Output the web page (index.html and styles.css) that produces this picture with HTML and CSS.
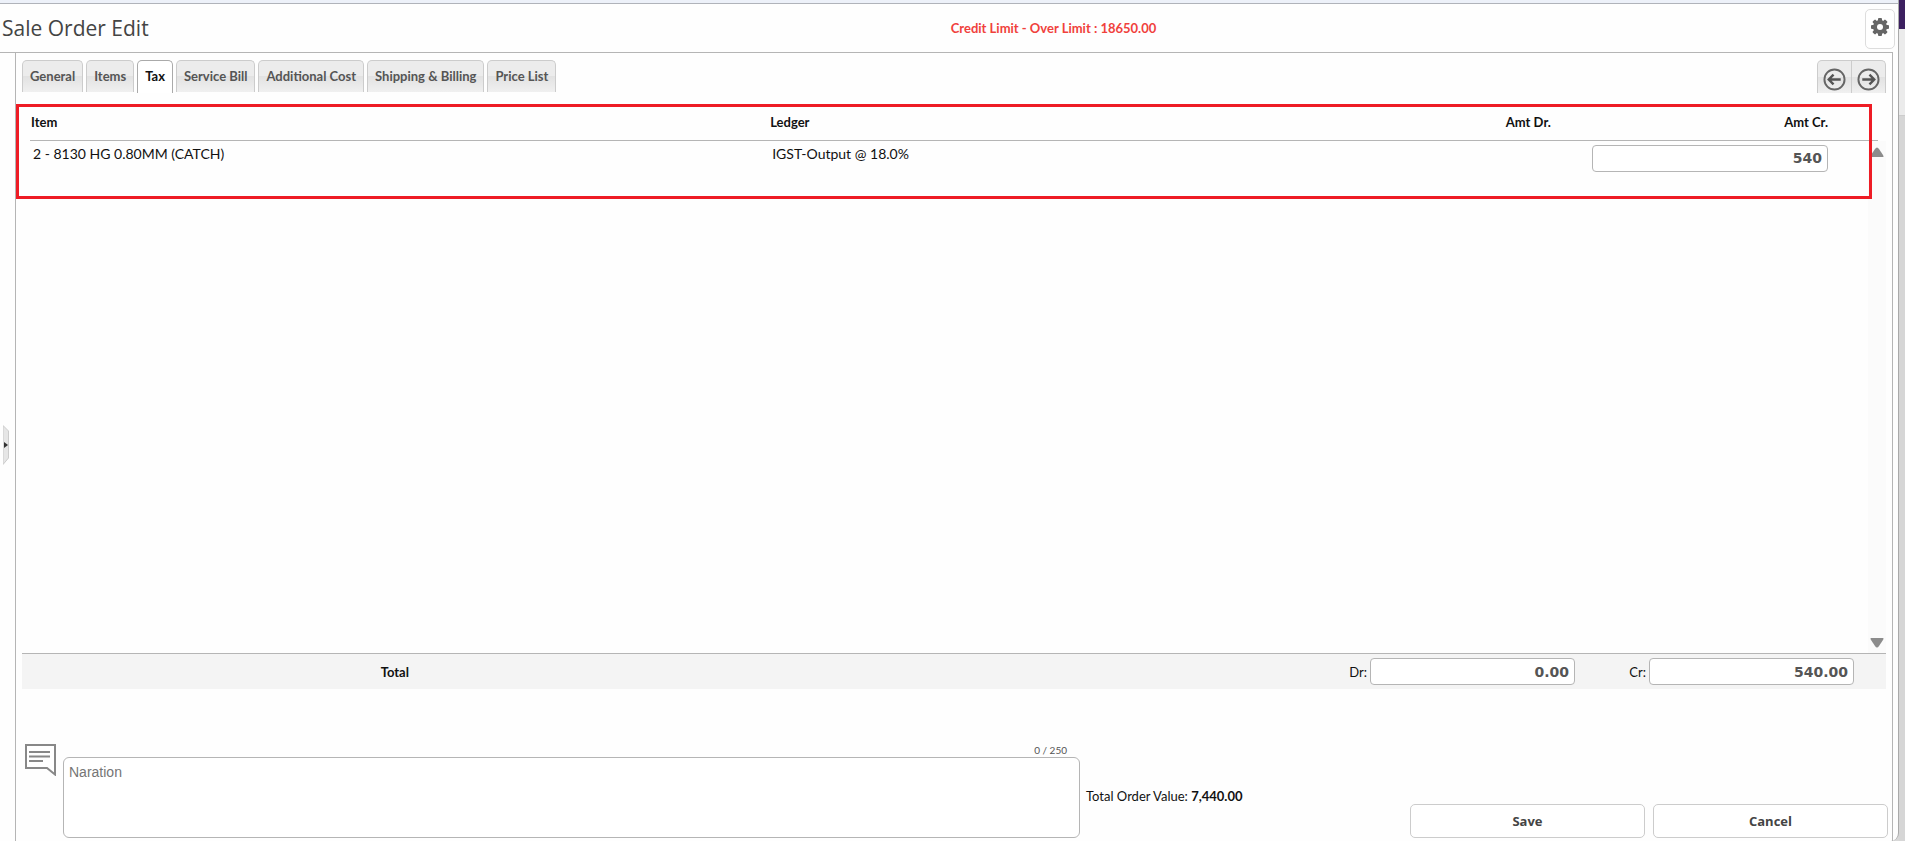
FILE: index.html
```html
<!DOCTYPE html>
<html lang="en">
<head>
<meta charset="utf-8">
<meta name="viewport" content="width=device-width, initial-scale=1.0">
<title>Sale Order Edit</title>
<link rel="stylesheet" href="styles.css">
</head>
<body>

<div class="window">
	<header class="header">
		<h1>Sale Order Edit</h1>
		<p class="credit-limit">Credit Limit - Over Limit : 18650.00</p>
		<button type="button" class="settings" aria-label="Settings">
			<svg width="18" height="18" viewBox="0 0 18 18">
				<g fill="#666">
					<rect x="7" y="0" width="4" height="18" rx="1"/>
					<rect x="7" y="0" width="4" height="18" rx="1" transform="rotate(45 9 9)"/>
					<rect x="7" y="0" width="4" height="18" rx="1" transform="rotate(90 9 9)"/>
					<rect x="7" y="0" width="4" height="18" rx="1" transform="rotate(135 9 9)"/>
					<circle cx="9" cy="9" r="7"/>
				</g>
				<circle cx="9" cy="9" r="3" fill="#fff"/>
			</svg>
		</button>
	</header>

	<div class="content">
		<aside class="rail">
			<button type="button" class="expand" aria-label="Expand">
				<svg width="6" height="40" viewBox="0 0 6 40">
					<path d="M0 0.5L5.5 6V33L0 39.5Z" fill="#e6e6e6" stroke="#ccc"/>
					<path d="M1 17L5 20L1 23Z" fill="#333"/>
				</svg>
			</button>
		</aside>

		<main class="panel">
			<div class="toolbar">
				<nav class="tabs">
					<button type="button" class="tab">General</button>
					<button type="button" class="tab">Items</button>
					<button type="button" class="tab active">Tax</button>
					<button type="button" class="tab">Service Bill</button>
					<button type="button" class="tab">Additional Cost</button>
					<button type="button" class="tab">Shipping &amp; Billing</button>
					<button type="button" class="tab">Price List</button>
				</nav>
				<div class="pager">
					<button type="button" aria-label="Previous">
						<svg width="23" height="23" viewBox="0 0 24 24" fill="none" stroke="#666">
							<circle cx="12" cy="12" r="10.5" stroke-width="2"/>
							<path d="M18.5 12H7M11 7L6 12L11 17" stroke="#555" stroke-width="2.5"/>
						</svg>
					</button>
					<button type="button" aria-label="Next">
						<svg width="23" height="23" viewBox="0 0 24 24" fill="none" stroke="#666">
							<circle cx="12" cy="12" r="10.5" stroke-width="2"/>
							<path d="M5.5 12H17M13 7L18 12L13 17" stroke="#555" stroke-width="2.5"/>
						</svg>
					</button>
				</div>
			</div>

			<section class="list">
				<table>
					<thead>
						<tr>
							<th class="col-item">Item</th>
							<th>Ledger</th>
							<th class="col-amount">Amt Dr.</th>
							<th class="col-amount">Amt Cr.</th>
							<td class="col-end"></td>
						</tr>
					</thead>
					<tbody>
						<tr>
							<td>2 - 8130 HG 0.80MM (CATCH)</td>
							<td>IGST-Output @ 18.0%</td>
							<td></td>
							<td class="amount"><input type="text" class="number" value="540" aria-label="Amt Cr."></td>
							<td></td>
						</tr>
					</tbody>
				</table>
				<div class="scrollbar">
					<button type="button" aria-label="Scroll up">
						<svg width="14" height="10" viewBox="0 0 14 10"><path d="M1 10Q0 10 1 8L5 2Q7 -1 9 2L13 8Q14 10 13 10Z" fill="#8c8c8c"/></svg>
					</button>
					<button type="button" aria-label="Scroll down">
						<svg width="14" height="10" viewBox="0 0 14 10"><path d="M1 0Q0 0 1 2L5 8Q7 11 9 8L13 2Q14 0 13 0Z" fill="#8c8c8c"/></svg>
					</button>
				</div>
				<div class="highlight"></div>
			</section>

			<section class="totals">
				<span class="totals-title">Total</span>
				<label for="total-dr">Dr:</label>
				<input type="text" id="total-dr" class="number" value="0.00">
				<label for="total-cr">Cr:</label>
				<input type="text" id="total-cr" class="number" value="540.00">
			</section>

			<footer class="bottom">
				<svg class="note" width="31" height="32" viewBox="0 0 31 32">
					<path d="M1 1H30V30.5L22 24H1Z" fill="#fff" stroke="#888" stroke-width="2"/>
					<path d="M4 8H25M4 12.5H25M4 17H18" stroke="#888" stroke-width="2"/>
				</svg>
				<div class="narration">
					<span class="counter">0 / 250</span>
					<textarea placeholder="Naration" aria-label="Naration" maxlength="250"></textarea>
				</div>
				<p class="order-value">Total Order Value: <strong>7,440.00</strong></p>
				<div class="actions">
					<button type="button">Save</button>
					<button type="button">Cancel</button>
				</div>
			</footer>
		</main>
	</div>
</div>

<div class="backdrop">
	<div class="backdrop-bar"></div>
	<div class="backdrop-head"></div>
</div>

</body>
</html>
```
FILE: styles.css
```css
* {
	box-sizing: border-box;
}

body, h1, p {
	margin: 0;
}

body {
	display: flex;
	height: 100vh;
	overflow: hidden;
	background: #d8d8d8;
	font-family: Lato, "Liberation Sans", sans-serif;
	font-size: 14px;
	color: #111;
}

button {
	font: inherit;
	padding: 0;
	border: 0;
	background: none;
	cursor: pointer;
}

svg {
	display: block;
}

.window {
	flex: 1;
	display: flex;
	flex-direction: column;
	min-width: 0;
	border-right: 1px solid #aaa;
	border-bottom-right-radius: 8px;
	background: #fefefe;
}

.window::before {
	content: "";
	height: 3px;
	background: #edf1f9;
	border-bottom: 1px solid #b0b3ba;
}

/* header */

.header {
	display: grid;
	grid-template-columns: 1fr auto 1fr;
	align-items: center;
	height: 49px;
	margin-right: 5px;
	padding-left: 2px;
	border-bottom: 1px solid #b5b5b5;
}

h1 {
	font-family: "Open Sans", sans-serif;
	font-size: 21px;
	font-weight: 400;
	line-height: 30px;
	color: #444;
}

.credit-limit {
	font-size: 13px;
	font-weight: 700;
	color: #f0413c;
	padding-left: 212px;
}

.settings {
	justify-self: end;
	display: flex;
	justify-content: center;
	width: 30px;
	height: 40px;
	margin-top: 2px;
	margin-right: -2px;
	padding-top: 8px;
	border: 1px solid #ddd;
	border-radius: 5px;
	background: #fff;
}

.content {
	flex: 1;
	display: flex;
	min-height: 0;
}

.rail {
	display: flex;
	align-items: center;
	width: 15px;
	padding: 0 0 4px 3px;
}

.panel {
	flex: 1;
	display: flex;
	flex-direction: column;
	min-width: 0;
	margin-right: 5px;
	padding-top: 7px;
	border-left: 1px solid #b5b5b5;
	border-right: 1px solid #b5b5b5;
}

/* tabs */

.toolbar {
	display: flex;
	justify-content: space-between;
	align-items: flex-start;
	height: 44px;
	padding: 0 6px;
}

.tabs {
	display: flex;
	gap: 3px;
}

.tab {
	height: 32px;
	padding: 0 7px 2px;
	border: 1px solid #ccc;
	border-bottom: 0;
	border-radius: 5px 5px 0 0;
	background: linear-gradient(#ececec 50%, #e2e2e2 50%, #f0f0f0);
	font-size: 13px;
	font-weight: 700;
	color: #555;
}

.tab.active {
	height: 33px;
	border-color: #aaa;
	background: #fff;
	color: #111;
}

.pager {
	display: flex;
	height: 33px;
	border: 1px solid #ccc;
	border-bottom: 0;
	border-radius: 5px 5px 0 0;
	background: linear-gradient(#ececec 50%, #e2e2e2 50%, #f0f0f0);
}

.pager button {
	display: flex;
	align-items: center;
	padding: 5px 5px 0;
}

.pager button + button {
	border-left: 1px solid #ccc;
}

/* tax list */

.list {
	flex: 1;
	position: relative;
	min-height: 0;
	padding: 0 14px;
}

table {
	width: 100%;
	table-layout: fixed;
	border-collapse: collapse;
}

thead tr {
	height: 36px;
	border-bottom: 1px solid #b5b5b5;
}

th {
	padding: 0 0 0 1px;
	font-size: 13px;
	font-weight: 700;
	text-align: left;
}

.col-item {
	width: 40%;
}

.col-amount {
	width: 15%;
	text-align: right;
}

.col-end {
	width: 50px;
}

tbody td {
	padding: 4px 0 0 3px;
	vertical-align: top;
}

.amount {
	text-align: right;
}

.number {
	height: 27px;
	padding: 0 5px;
	border: 1px solid #b5b5b5;
	border-radius: 4px;
	background: #fff;
	font-family: "DejaVu Sans", sans-serif;
	font-size: 14px;
	font-weight: 700;
	color: #555;
	text-align: right;
}

.amount .number {
	width: 86%;
}

.scrollbar {
	position: absolute;
	top: 37px;
	right: 6px;
	bottom: 0;
	display: flex;
	flex-direction: column;
	justify-content: space-between;
	align-items: center;
	width: 18px;
	padding: 6px 0 5px;
	background: #fbfbfb;
}

.highlight {
	position: absolute;
	top: 0;
	left: 0;
	right: 20px;
	height: 95px;
	border: 3px solid #ee1c25;
	pointer-events: none;
}

/* totals */

.totals {
	display: grid;
	grid-template-columns: 40% 1fr 11% 68px 11% 29px;
	align-items: center;
	column-gap: 3px;
	height: 36px;
	margin: 0 6px;
	border-top: 1px solid #b5b5b5;
	background: #f4f4f4;
	font-size: 13px;
	text-align: right;
}

.totals-title {
	font-weight: 700;
	text-align: center;
}

/* narration and buttons */

.bottom {
	display: flex;
	align-items: flex-end;
	height: 152px;
	padding: 0 4px 3px 9px;
}

.note {
	align-self: flex-start;
	margin-top: 55px;
}

.narration {
	flex: 1;
	display: flex;
	flex-direction: column;
	margin-left: 7px;
}

.counter {
	align-self: flex-end;
	margin-right: 13px;
	font-size: 10px;
	line-height: 14px;
	color: #555;
}

textarea {
	width: 100%;
	height: 81px;
	padding: 6px 5px;
	border: 1px solid #b5b5b5;
	border-radius: 6px;
	background: #fff;
	font-family: "Liberation Sans", Arial, sans-serif;
	font-size: 14px;
	resize: none;
}

.order-value {
	width: 330px;
	margin-bottom: 34px;
	padding-left: 6px;
	font-size: 13px;
}

.actions {
	display: flex;
	gap: 8px;
	width: 478px;
}

.actions button {
	flex: 1;
	height: 34px;
	border: 1px solid #ccc;
	border-radius: 5px;
	background: #fff;
	font-family: "Open Sans", sans-serif;
	font-size: 13px;
	font-weight: 700;
	color: #444;
}

/* strip of the page behind the window */

.backdrop {
	width: 6px;
	background: #d6d6d6;
}

.backdrop-bar {
	height: 29px;
	background: #3c2060;
}

.backdrop-head {
	height: 87px;
	border-bottom: 1px solid #ccc;
	background: #ebebeb;
}
```
